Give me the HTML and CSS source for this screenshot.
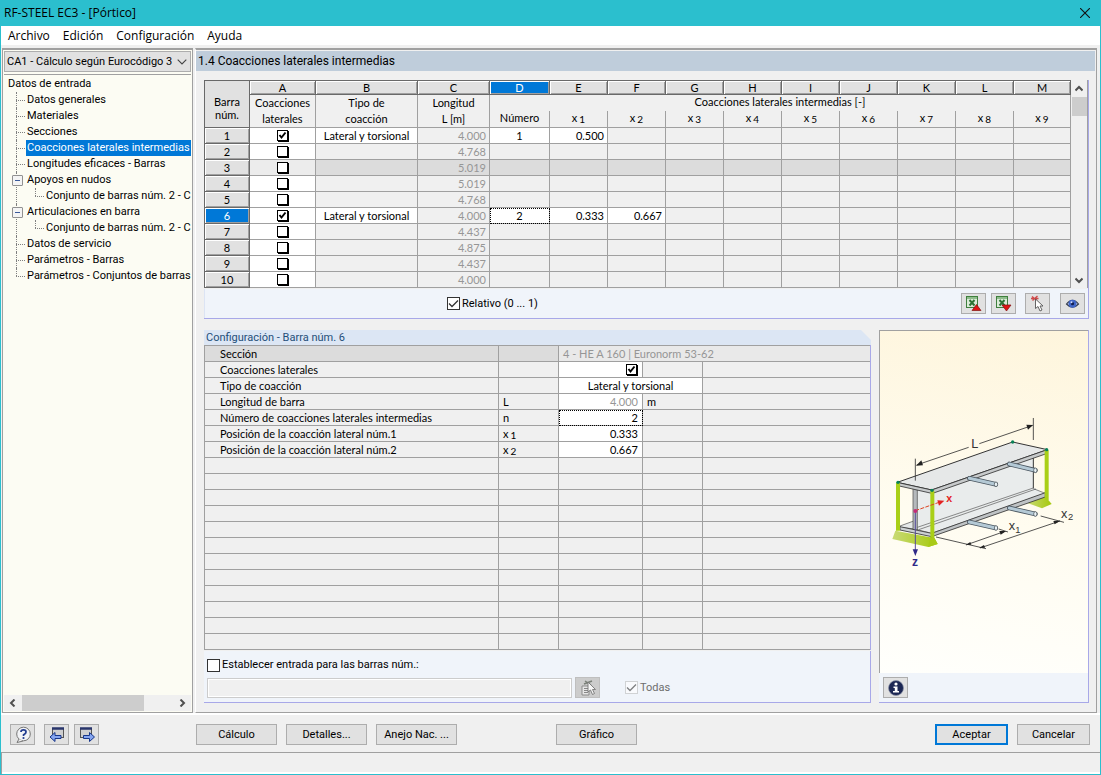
FILE: index.html
```html
<!DOCTYPE html>
<html lang="es">
<head>
<meta charset="utf-8">
<title>RF-STEEL EC3 - [Pórtico]</title>
<link rel="stylesheet" href="styles.css">
</head>
<body>
<div class="window">
  <header class="titlebar">
    <h1>RF-STEEL EC3 - [Pórtico]</h1>
    <button class="close" aria-label="Cerrar"><svg width="10" height="10" viewBox="0 0 10 10"><path d="M0 0L10 10M10 0L0 10" stroke="#111" stroke-width="1.1"/></svg></button>
  </header>
  <nav class="menubar">
    <button>Archivo</button><button>Edición</button><button>Configuración</button><button>Ayuda</button>
  </nav>

  <main class="main">
    <aside class="sidebar">
      <div class="combo">
        <select aria-label="Caso de cálculo"><option>CA1 - Cálculo según Eurocódigo 3</option></select>
        <svg width="10" height="6" viewBox="0 0 10 6"><path d="M.7 .7L5 5L9.300 .7" fill="none" stroke="#444" stroke-width="1.1"/></svg>
      </div>
      <div class="tree-box">
        <p class="tree-root">Datos de entrada</p>
        <ul class="tree">
          <li><a href="#">Datos generales</a></li>
          <li><a href="#">Materiales</a></li>
          <li><a href="#">Secciones</a></li>
          <li><a href="#" class="selected">Coacciones laterales intermedias</a></li>
          <li><a href="#">Longitudes eficaces - Barras</a></li>
          <li class="open"><a href="#">Apoyos en nudos</a>
            <ul><li><a href="#">Conjunto de barras núm. 2 - C</a></li></ul></li>
          <li class="open"><a href="#">Articulaciones en barra</a>
            <ul><li><a href="#">Conjunto de barras núm. 2 - C</a></li></ul></li>
          <li><a href="#">Datos de servicio</a></li>
          <li><a href="#">Parámetros - Barras</a></li>
          <li><a href="#">Parámetros - Conjuntos de barras</a></li>
        </ul>
      </div>
      <div class="hscroll">
        <svg width="7" height="8" viewBox="0 0 7 8"><path d="M5.500 .5L2 4L5.500 7.500" fill="none" stroke="#505050" stroke-width="2"/></svg>
        <span class="track"><span class="thumb"></span></span>
        <svg width="7" height="8" viewBox="0 0 7 8"><path d="M1.500 .5L5 4L1.500 7.500" fill="none" stroke="#505050" stroke-width="2"/></svg>
      </div>
    </aside>

    <section class="content">
      <h2 class="heading">1.4 Coacciones laterales intermedias</h2>
      <div class="panels">
        <section class="group">
          <div class="grid-row">
            <table class="grid">
              <colgroup><col class="c-num"><col class="c-a"><col class="c-b"><col class="c-c"><col class="c-d"><col class="c-x" span="8"><col class="c-m"></colgroup>
              <thead>
                <tr class="letters"><th rowspan="3" class="corner">Barra<br>núm.</th><th>A<th>B<th>C<th class="on">D<th>E<th>F<th>G<th>H<th>I<th>J<th>K<th>L<th>M</tr>
                <tr class="names"><th rowspan="2">Coacciones<br>laterales<th rowspan="2">Tipo de<br>coacción<th rowspan="2">Longitud<br>L [m]<th colspan="10" class="span">Coacciones laterales intermedias [-]</tr>
                <tr class="subs"><th>Número<th>x<sub>1</sub><th>x<sub>2</sub><th>x<sub>3</sub><th>x<sub>4</sub><th>x<sub>5</sub><th>x<sub>6</sub><th>x<sub>7</sub><th>x<sub>8</sub><th>x<sub>9</sub></tr>
              </thead>
              <tbody>
                <tr><th>1<td class="w"><input type="checkbox" class="tick" aria-label="Barra 1" checked><td class="w">Lateral y torsional<td class="len">4.000<td class="w">1<td class="w val">0.500<td><td><td><td><td><td><td><td></tr>
                <tr><th>2<td class="w"><input type="checkbox" class="tick" aria-label="Barra 2"><td><td class="len">4.768<td><td><td><td><td><td><td><td><td><td></tr>
                <tr class="shade"><th>3<td class="w"><input type="checkbox" class="tick" aria-label="Barra 3"><td><td class="len">5.019<td><td><td><td><td><td><td><td><td><td></tr>
                <tr><th>4<td class="w"><input type="checkbox" class="tick" aria-label="Barra 4"><td><td class="len">5.019<td><td><td><td><td><td><td><td><td><td></tr>
                <tr><th>5<td class="w"><input type="checkbox" class="tick" aria-label="Barra 5"><td><td class="len">4.768<td><td><td><td><td><td><td><td><td><td></tr>
                <tr><th class="on">6<td class="w"><input type="checkbox" class="tick" aria-label="Barra 6" checked><td class="w">Lateral y torsional<td class="len">4.000<td class="w focus">2<td class="w val">0.333<td class="w val">0.667<td><td><td><td><td><td><td></tr>
                <tr><th>7<td class="w"><input type="checkbox" class="tick" aria-label="Barra 7"><td><td class="len">4.437<td><td><td><td><td><td><td><td><td><td></tr>
                <tr><th>8<td class="w"><input type="checkbox" class="tick" aria-label="Barra 8"><td><td class="len">4.875<td><td><td><td><td><td><td><td><td><td></tr>
                <tr><th>9<td class="w"><input type="checkbox" class="tick" aria-label="Barra 9"><td><td class="len">4.437<td><td><td><td><td><td><td><td><td><td></tr>
                <tr><th>10<td class="w"><input type="checkbox" class="tick" aria-label="Barra 10"><td><td class="len">4.000<td><td><td><td><td><td><td><td><td><td></tr>
              </tbody>
            </table>
            <div class="vscroll">
              <svg width="8" height="7" viewBox="0 0 8 7"><path d="M.5 5.500L4 2L7.500 5.500" fill="none" stroke="#505050" stroke-width="2"/></svg>
              <span class="vthumb"></span>
              <svg width="8" height="7" viewBox="0 0 8 7"><path d="M.5 1.500L4 5L7.500 1.500" fill="none" stroke="#505050" stroke-width="2"/></svg>
            </div>
          </div>
          <div class="toolbar">
            <label class="check"><input type="checkbox" class="box" checked>Relativo (0 ... 1)</label>
            <div class="tools">
              <button class="icon" aria-label="Exportar a Excel"><svg width="18" height="18" viewBox="0 0 18 18"><rect x="1.500" y="1.500" width="11" height="11" fill="#dcebd8" stroke="#3e7f3d"/><rect x="2" y="2" width="10" height="2" fill="#8fbd8c"/><path d="M4.500 5L9.500 10.500M9.500 5L4.500 10.500" stroke="#2d7434" stroke-width="2"/><path d="M7 15.500L11.500 9.500L16 15.500Z" fill="#df1515" stroke="#831010" stroke-width=".7"/></svg></button>
              <button class="icon" aria-label="Importar de Excel"><svg width="18" height="18" viewBox="0 0 18 18"><rect x="1.500" y="1.500" width="11" height="11" fill="#dcebd8" stroke="#3e7f3d"/><rect x="2" y="2" width="10" height="2" fill="#8fbd8c"/><path d="M4.500 5L9.500 10.500M9.500 5L4.500 10.500" stroke="#2d7434" stroke-width="2"/><path d="M7 10L11.500 16L16 10Z" fill="#df1515" stroke="#831010" stroke-width=".7"/></svg></button>
              <button class="icon pick" aria-label="Seleccionar"><svg width="18" height="18" viewBox="0 0 18 18"><path d="M3 1.500L8 5.500M3.500 5.500L8.500 1M2 3.500H9.500" stroke="#d04b4b" stroke-width="1.400"/><path d="M6.500 4V13.500L9 11.500L11 16L13 15L11 11H14Z" fill="#fff" stroke="#555" stroke-width=".9"/></svg></button>
              <button class="icon view" aria-label="Ver"><svg width="18" height="18" viewBox="0 0 18 18"><path d="M2.500 9Q8.500 1.500 14.500 9Q8.500 15.500 2.500 9Z" fill="#d6def0" stroke="#343c4c" stroke-width="1.200"/><circle cx="8.500" cy="8.700" r="4" fill="#4166c8"/><circle cx="8.500" cy="8.700" r="1.600" fill="#101d50"/><circle cx="7.500" cy="7.300" r="1" fill="#cfdcff"/></svg></button>
            </div>
          </div>
        </section>

        <div class="lower">
          <section class="config">
            <h3>Configuración - Barra núm. 6</h3>
            <div class="props-wrap">
            <table class="props">
              <colgroup><col class="p-name"><col class="p-sym"><col class="p-val"><col class="p-unit"><col class="p-rest"></colgroup>
              <tbody>
                <tr class="shade"><th>Sección<td><td colspan="3" class="section">4 - HE A 160 | Euronorm 53-62</tr>
                <tr><th>Coacciones laterales<td><td class="w num"><input type="checkbox" class="tick" aria-label="Coacciones laterales" checked><td><td></tr>
                <tr><th>Tipo de coacción<td><td colspan="2" class="w mid">Lateral y torsional<td></tr>
                <tr><th>Longitud de barra<td>L<td class="w num dim">4.000<td>m<td></tr>
                <tr><th>Número de coacciones laterales intermedias<td>n<td class="w num focus">2<td><td></tr>
                <tr><th>Posición de la coacción lateral núm.1<td>x<sub>1</sub><td class="w num">0.333<td><td></tr>
                <tr><th>Posición de la coacción lateral núm.2<td>x<sub>2</sub><td class="w num">0.667<td><td></tr>
                <tr><td><td><td><td><td></tr><tr><td><td><td><td><td></tr><tr><td><td><td><td><td></tr>
                <tr><td><td><td><td><td></tr><tr><td><td><td><td><td></tr><tr><td><td><td><td><td></tr>
                <tr><td><td><td><td><td></tr><tr><td><td><td><td><td></tr><tr><td><td><td><td><td></tr>
                <tr><td><td><td><td><td></tr><tr><td><td><td><td><td></tr><tr><td><td><td><td><td></tr>
              </tbody>
            </table>
            </div>
            <div class="apply">
              <label class="check"><input type="checkbox" class="box">Establecer entrada para las barras núm.:</label>
              <div class="apply-row">
                <input type="text" class="members" aria-label="Barras núm." disabled>
                <button class="icon" aria-label="Seleccionar barras" disabled><svg width="18" height="18" viewBox="0 0 18 18"><path d="M3 7H10V16H3Z" fill="#e6e6e6" stroke="#8b8b8b"/><path d="M5 9.500H9M5 11.500H9M5 13.500H9" stroke="#888"/><path d="M5 5L13 2M6 2L12 6" stroke="#7a8078" stroke-width="1.500"/><path d="M9 3V13L11.500 11L13.500 15.500L15.500 14.500L13.500 10.500H16.500Z" fill="#f5f5f5" stroke="#777" stroke-width=".9"/></svg></button>
                <label class="check all"><input type="checkbox" class="box" checked disabled>Todas</label>
              </div>
            </div>
          </section>

          <section class="preview">
            <div class="canvas">
              <svg class="beam" viewBox="0 0 208 340" preserveAspectRatio="xMidYMid meet" role="img" aria-label="Viga con coacciones laterales">
                <defs>
                  <linearGradient id="foot" x1="0" y1="0" x2="1" y2="0"><stop offset="0" stop-color="#c9da76"/><stop offset="1" stop-color="#a5c90c"/></linearGradient>
                </defs>
                <g transform="translate(0 68) scale(.33333)" stroke-linejoin="round">
                  <path d="M440 308L494 289L505 300L515 312L486 325Z" fill="url(#foot)"/>
                  <path d="M108 270L460 158V262L495 281L155 400L104 387Z" fill="#e9ecec"/>
                  <path d="M460 168V265" stroke="#333" stroke-width="3"/>
                  <path d="M60 378L104 362V387L60 382Z" fill="#e5e8e8" stroke="#444" stroke-width="2"/>
                  <path d="M112 382L460 264M116 389L468 267M108 388L155 400L496 280L460 266" fill="none" stroke="#555" stroke-width="2"/>
                  <path d="M155 400L496 278V291L155 410Z" fill="#bfc3c5" stroke="#333" stroke-width="2.500"/>
                  <path d="M99 260H112V390H99Z" fill="#b5b9bc" stroke="#444" stroke-width="2"/>
                  <path d="M52 247L398 126L502 149L155 270Z" fill="#e6e8e8" stroke="#333" stroke-width="3"/>
                  <path d="M155 270L502 149V160L155 281Z" fill="#c7cacb" stroke="#333" stroke-width="2.500"/>
                  <path d="M55 248L155 270V280L58 258Z" fill="#c7cacb" stroke="#333" stroke-width="2.500"/>
                  <path d="M46 392L37 417L145 441L173 432L160 409L150 412Z" fill="url(#foot)"/>
                  <path d="M150 411L145 441L173 432L161 409Z" fill="#a9ca18"/>
                  <path d="M60 380L155 400V410L60 390Z" fill="#cbd0d2" stroke="#333" stroke-width="2.500"/>
                  <path d="M48 248H60V392H48ZM151 272H163V412H151ZM494 150H506V300H494Z" fill="#a9cf17"/>
                  <g fill="#078257"><circle cx="54" cy="247" r="5"/><circle cx="156" cy="271" r="5"/><circle cx="398" cy="126" r="5"/><circle cx="500" cy="149" r="5"/></g>
                  <path d="M268 235L347 253M388 192L466 211M268 366L347 384M388 324L466 342" stroke="#4a5660" stroke-width="14" stroke-linecap="round"/>
                  <path d="M268 235L347 253M388 192L466 211M268 366L347 384M388 324L466 342" stroke="#b4c9d5" stroke-width="9" stroke-linecap="round"/>
                  <g fill="#e9f2f6" stroke="#3c454c" stroke-width="2"><ellipse cx="348" cy="253" rx="5" ry="7"/><ellipse cx="466" cy="211" rx="5" ry="7"/><ellipse cx="348" cy="384" rx="5" ry="7"/><ellipse cx="466" cy="342" rx="5" ry="7"/></g>
                  <g stroke="#333" stroke-width="2.500" fill="none"><path d="M106 176V242M460 54V120M110 195L266 142M298 131L458 76"/><path d="M168 411L318 446M258 435L372 395M300 444L540 363M356 387L384 396M482 348L552 367"/></g>
                  <g fill="#222"><path d="M108 197L124 181L129 196Z"/><path d="M459 75L439 74L444 89Z"/><path d="M379 393L358 393L362 404Z"/><path d="M541 362L520 363L524 373Z"/><path d="M257 435L271 426L274 434Z"/><path d="M297 444L312 435L315 443Z"/></g>
                  <path d="M106 332L180 306" stroke="#d42" stroke-width="3" stroke-dasharray="12 4"/>
                  <path d="M193 302L172 301L177 317Z" fill="#e32222"/>
                  <path d="M106 332V450" stroke="#564b9c" stroke-width="3"/><path d="M98 448H114L106 468Z" fill="#302a88"/>
                  <circle cx="106" cy="333" r="6" fill="#c32c78"/>
                  <g class="beam-label"><text x="274" y="145">L</text><text x="386" y="391">x</text><text class="beam-sub" x="406" y="400">1</text><text x="543" y="354">x</text><text class="beam-sub" x="564" y="361">2</text><text class="beam-x" x="199" y="307">x</text><text class="beam-z" x="96" y="499">z</text></g>
                </g>
              </svg>
            </div>
            <div class="preview-bar">
              <button class="icon" aria-label="Información"><svg width="18" height="18" viewBox="0 0 18 18"><circle cx="9" cy="9" r="7.500" fill="#1c2754" stroke="#8d93a8" stroke-width=".7"/><circle cx="9" cy="5" r="1.600" fill="#fff"/><path d="M6.500 7.500H10.500V12H12V13.500H6V12H7.800V9H6.500Z" fill="#fff"/></svg></button>
            </div>
          </section>
        </div>
      </div>
    </section>
  </main>

  <footer class="actions">
    <button class="icon" aria-label="Ayuda"><svg width="18" height="18" viewBox="0 0 18 18"><circle cx="9.500" cy="8" r="6.800" fill="#f2f3f6" stroke="#777"/><path d="M5 13L3 16.500L9 15" fill="#eee" stroke="#777"/><path d="M7 6Q7 3.800 9.500 3.800T12 6Q12 7.500 9.600 8.700V10" fill="none" stroke="#233e91" stroke-width="1.800"/><circle cx="9.500" cy="12" r="1.100" fill="#233e91"/></svg></button>
    <button class="icon back" aria-label="Anterior"><svg width="18" height="18" viewBox="0 0 18 18"><rect x="4.500" y="2.500" width="11" height="9" fill="#cfcfd0" stroke="#555"/><path d="M4 2.500H16" stroke="#28356b" stroke-width="2.500"/><path d="M2 11L7 6.500V9.500H13V12.500H7V15.500Z" fill="#85a5f0" stroke="#16358a"/></svg></button>
    <button class="icon fwd" aria-label="Siguiente"><svg width="18" height="18" viewBox="0 0 18 18"><rect x="2.500" y="2.500" width="11" height="9" fill="#cfcfd0" stroke="#555"/><path d="M2 2.500H14" stroke="#28356b" stroke-width="2.500"/><path d="M16.500 11L11.500 6.500V9.500H5.500V12.500H11.500V15.500Z" fill="#85a5f0" stroke="#16358a"/></svg></button>
    <div class="group-mid"><button class="btn">Cálculo</button><button class="btn">Detalles...</button><button class="btn">Anejo Nac. ...</button></div>
    <button class="btn graph">Gráfico</button>
    <div class="group-end"><button class="btn default">Aceptar</button><button class="btn">Cancelar</button></div>
  </footer>
  <div class="statusbar"></div>
</div>
</body>
</html>
```
FILE: styles.css
```css
* { box-sizing: border-box; }
body { margin: 0; background: #f0f0f0; color: #000; font: 11px/16px Roboto, "Noto Sans", sans-serif; }
h1, h2, h3, p, ul { margin: 0; padding: 0; font-weight: normal; }
button, input, select { font: inherit; color: inherit; margin: 0; }
button { padding: 0; border: 1px solid #adadad; background: #e1e1e1; }
svg { display: block; flex: none; }

.window { min-height: 100vh; display: flex; flex-direction: column; border: 1px solid #2bbfce; border-top: 0; }
.titlebar { height: 26px; margin: 0 -1px; padding: 0 11px 0 4px; display: flex; align-items: center; justify-content: space-between; background: #2bbfce; }
.titlebar h1 { font: 12px/20px "Open Sans", sans-serif; }
.close { border: 0; background: none; }
.menubar { height: 19px; margin-bottom: 3px; padding-left: 7px; display: flex; gap: 13px; background: #fff; }
.menubar button { border: 0; background: none; font: 12px/20px "Open Sans", sans-serif; }

.main { flex: 1; display: flex; gap: 2px; margin: 0 3px 0 1px; }
.sidebar { width: 191px; flex: none; display: flex; flex-direction: column; padding: 1px; border: 1px solid #a0a0a0; border-top-width: 2px; background: #fcfcf3; }
.combo { height: 21px; display: flex; align-items: center; border: 1px solid #adadad; background: #e1e1e1; padding-right: 3px; }
.combo select { flex: 1; min-width: 0; height: 19px; padding: 1px 0 0 2px; border: 0; appearance: none; background: none; }
.tree-box { flex: 1; margin-top: 2px; padding-top: 1px; border-top: 1px solid #a0a0a0; overflow: hidden; white-space: nowrap; }
.tree-root { padding: 0 0 0 4px; }
.tree { list-style: none; padding-left: 12px; }
.tree ul { list-style: none; padding-left: 9px; }
.tree li { position: relative; padding-left: 10px; }
.tree li::before { content: ""; position: absolute; left: 0; top: 0; bottom: 0; border-left: 1px dotted #808080; }
.tree > li:last-child::before, .tree ul li::before { bottom: auto; height: 8px; }
.tree li::after { content: ""; position: absolute; left: 0; top: 8px; width: 9px; border-top: 1px dotted #808080; }
.tree li.open::after { left: -4px; top: 3px; width: 9px; height: 9px; border: 1px solid #919191; border-radius: 1px; background: linear-gradient(#3b5a9a, #3b5a9a) center / 5px 1px no-repeat #f4f4f4; }
.tree a { display: inline-block; padding: 0 1px; height: 16px; color: #000; text-decoration: none; vertical-align: top; }
.tree a.selected { color: #fff; background: #0078d7; }
.hscroll { height: 16px; display: flex; align-items: center; gap: 6px; padding: 0 5px; background: #f0f0f0; }
.track { flex: 1; height: 16px; }
.thumb { display: block; width: 81%; height: 16px; background: #cdcdcd; }

.content { flex: 1; min-width: 0; display: flex; flex-direction: column; border: 1px solid #a0a0a0; border-top-width: 2px; border-left-color: #fff; padding: 1px 1px 9px 0; }
.heading { height: 20px; padding-left: 2px; background: #bfcddb; font: 12px/20px Roboto, sans-serif; }
.panels { flex: 1; display: flex; flex-direction: column; gap: 11px; margin-top: 9px; padding: 0 6px 0 8px; }
.group { border-right: 1px solid #a8a8e8; border-bottom: 1px solid #a8a8e8; }
.grid-row { display: flex; }

table { border-spacing: 0; table-layout: fixed; font-family: Lato, "Liberation Sans", sans-serif; }
td, th { padding: 0; font-weight: normal; line-height: 15px; border: 0 solid #a0a0a0; border-width: 0 1px 1px 0; white-space: nowrap; }
sub { font-size: 10px; line-height: 0; vertical-align: -1px; margin-left: 2px; }
.grid { flex: 1; min-width: 0; border: solid #696969; border-width: 1px 0 0 1px; text-align: center; }
.c-num { width: 45px; } .c-a { width: 66px; } .c-b { width: 102px; } .c-c { width: 72px; } .c-d { width: 60px; } .c-x { width: 58px; } .c-m { width: 57px; }
.letters { height: 14px; }
.letters th { line-height: 13px; background: #e1e1e1; border-color: #696969; box-shadow: inset 1px 1px #fff, inset -1px -1px #a0a0a0; }
.letters .corner { line-height: 13px; padding-top: 8px; box-shadow: none; }
.grid th.on { background: #0078d7; color: #fff; }
.names { height: 16px; }
.names th { line-height: 16px; }
.names .span { line-height: 14px; border-bottom: 0; padding-bottom: 2px; }
.subs { height: 17px; }
.subs th { line-height: 14px; padding-bottom: 2px; }
.grid tbody tr, .props tr { height: 16px; }
.grid tbody td, .grid tbody th { line-height: 14px; }
.grid tbody th { background: #e1e1e1; border-color: #696969; box-shadow: inset 1px 1px #fff, inset -1px -1px #a0a0a0; }
.grid tbody th.on { background: #0078d7; }
.shade td, .props .shade th { background: #dcdcdc; }
.grid .shade .w { background: #ececec; }
.w { background: #fff; }
.len { color: #969696; text-align: right; padding-right: 3px; }
.val { text-align: right; padding-right: 3px; }
.focus { outline: 1px dotted #000; outline-offset: -1px; }

.tick { appearance: none; display: block; width: 11px; height: 11px; margin: 0 auto; border: 1px solid #000; background: #fff; box-shadow: 1px 1px #000; }
.tick:checked { background: #fff url('data:image/svg+xml,<svg xmlns="http://www.w3.org/2000/svg" viewBox="0 0 9 9"><path d="M1.500 4L3.500 6.500L7.500 1.500" fill="none" stroke="black" stroke-width="2"/></svg>') center / 9px 9px no-repeat; }
.box { appearance: none; width: 13px; height: 13px; border: 1px solid #333; background: #fff; }
.box:checked { background: #fff url('data:image/svg+xml,<svg xmlns="http://www.w3.org/2000/svg" viewBox="0 0 11 11"><path d="M1 5.500L4 8.500L10 2.500" fill="none" stroke="black" stroke-opacity=".8" stroke-width="1.300"/></svg>') center / 11px 11px no-repeat; }
.box:disabled { border-color: #bcbcbc; opacity: .6; }
.check { display: flex; align-items: center; gap: 2px; }

.vscroll { width: 17px; flex: none; display: flex; flex-direction: column; align-items: center; padding: 5px 0 4px; border-right: 1px solid #a0a0a0; }
.vthumb { width: 15px; height: 19px; margin: 5px 0 auto; background: #cdcdcd; }
.toolbar { height: 29px; display: flex; align-items: center; margin-top: 1px; padding: 0 3px 0 242px; border-left: 1px solid #dce4f4; background: #f0f4fa; }
.tools { display: flex; margin-left: auto; }
.icon { width: 25px; height: 21px; display: grid; place-items: center; flex: none; }
.tools .icon { margin-left: 5px; }
.tools .pick { margin-left: 9px; }
.tools .view { margin-left: 10px; }

.lower { flex: 1; display: flex; gap: 8px; }
.config { flex: 1; min-width: 0; display: flex; flex-direction: column; }
.config h3 { height: 15px; background: #dce6f4; color: #1f4e79; font-size: 11px; line-height: 15px; padding-left: 2px; clip-path: polygon(0 0, calc(100% - 10px) 0, 100% 10px, 100% 100%, 0 100%); }
.props-wrap { border-right: 1px solid #a8a8e8; }
.props { width: 100%; border: solid #a0a0a0; border-width: 1px 0 0 1px; }
.p-name { width: 294px; } .p-sym { width: 60px; } .p-val { width: 84px; } .p-unit { width: 60px; }
.props th { text-align: left; padding-left: 15px; }
.props th, .props td { line-height: 14px; }
.props td { padding: 0 4px; }
.props td:last-child { border-right: 0; }
.props .num { text-align: right; }
.props .num .tick { margin: 0 1px 0 auto; }
.props .mid { text-align: center; }
.props .dim { color: #969696; }
.props .section { background: #e9e9e9; color: #969696; }
.apply { flex: 1; padding: 6px 3px 0; border: solid #a8a8e8; border-width: 0 1px 1px 0; background: #f0f4fa; margin-top: 1px; }
.apply-row { display: flex; align-items: center; margin-top: 4px; }
.members { flex: 1; max-width: 365px; height: 20px; border: 1px solid #ccc; outline: 1px solid #fff; outline-offset: -2px; background: #f0f0f0; }
.apply-row .icon { margin-left: 3px; background: #ccc; border-color: #bfbfbf; }
.all { margin-left: 25px; color: #6d6d6d; }

.preview { width: 210px; flex: none; display: flex; flex-direction: column; border: solid #a8a8e8; border-width: 0 1px 1px 0; }
.canvas { flex: 1; border: solid #a0a0a0; border-width: 1px 0 0 1px; background: linear-gradient(190deg, #fef5dc, #fffcf0 55%, #fffffc); }
.beam { width: 100%; height: 100%; }
.beam-label { font: 38px "Liberation Sans", sans-serif; fill: #333; }
.beam-sub { font-size: 28px; }
.beam-x { font-weight: bold; font-size: 32px; fill: #e32222; }
.beam-z { font-weight: bold; font-size: 36px; fill: #302a88; }
.preview-bar { height: 29px; padding: 4px; background: #f0f4fa; }

.actions { height: 39px; flex: none; display: flex; align-items: center; padding: 2px 10px 0 9px; border-top: 2px solid #fff; }
.actions .back { margin-left: 9px; }
.actions .fwd { margin-left: 5px; }
.btn { width: 81px; height: 21px; }
.group-mid { display: flex; gap: 9px; margin-left: 97px; }
.graph { margin-left: 99px; }
.group-end { display: flex; gap: 9px; margin-left: auto; }
.group-end .btn { width: 73px; }
.group-end .default { border: 2px solid #0078d7; }
.statusbar { height: 22px; flex: none; border: solid #a0a0a0; border-width: 1px 0 0 1px; box-shadow: inset 0 -2px #fff; }
```
